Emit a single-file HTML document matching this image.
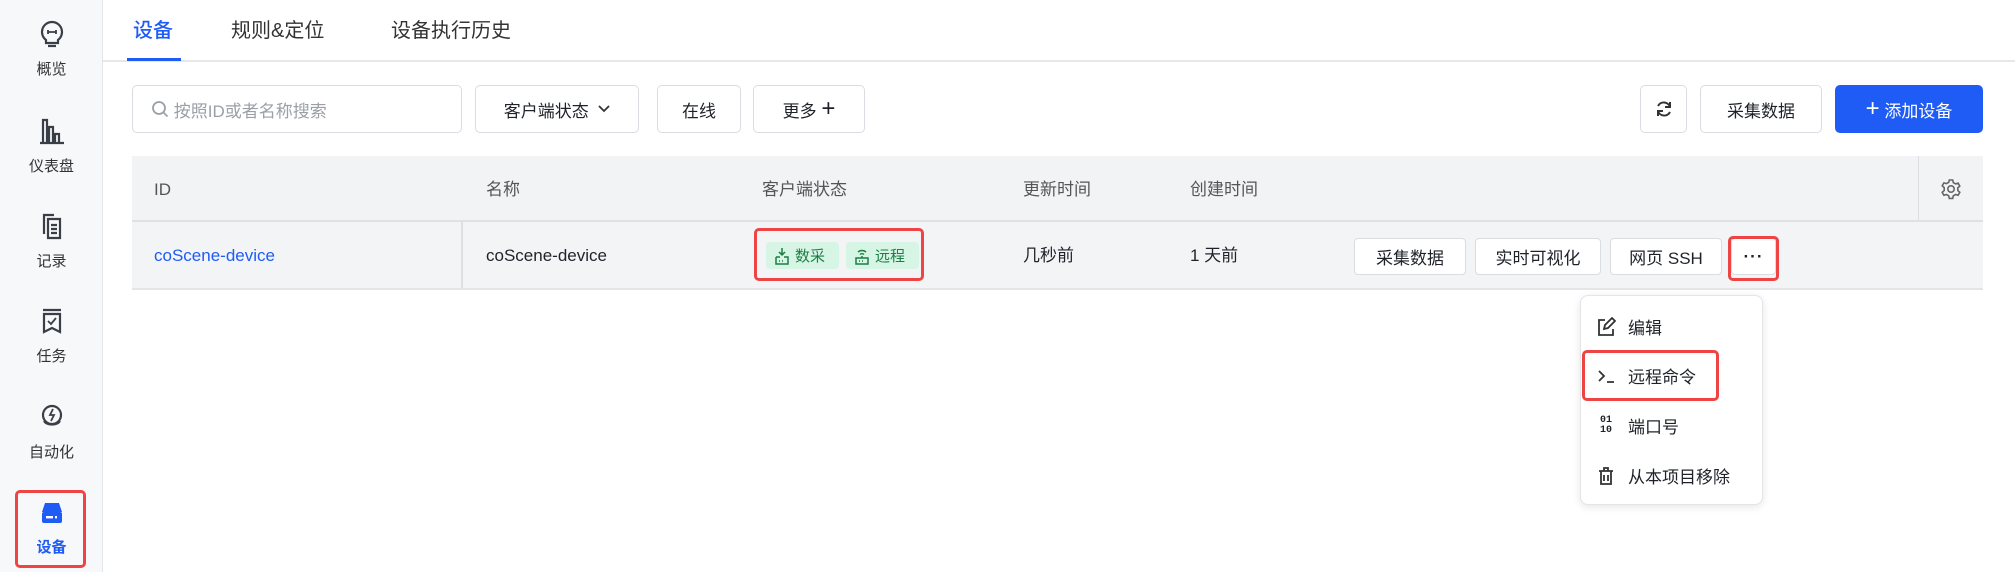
<!DOCTYPE html>
<html><head><meta charset="utf-8"><style>
*{box-sizing:border-box;margin:0;padding:0}
body{width:2015px;height:572px;background:#fff;font-family:"Liberation Sans","Noto Sans CJK SC",sans-serif;color:#1f2329;position:relative;overflow:hidden}
.a{position:absolute}
.side{left:0;top:0;width:103px;height:572px;background:#f7f8fa;border-right:1px solid #e3e5e8}
.si{position:absolute;left:0;width:103px;text-align:center;font-size:15px;color:#333}
.si svg{display:block;margin:0 auto 10px}
.tab{top:14px;font-size:20px;color:#333}
.btn{border:1px solid #d9dce1;border-radius:5px;background:#fff;font-size:17px;color:#1f2329;display:flex;align-items:center;justify-content:center}
.th{font-size:17px;color:#555;top:176px;height:28px;line-height:28px}
.td{font-size:17px;top:242px;height:28px;line-height:28px}
.sb{top:238px;height:37px;border:1px solid #d9dce1;border-radius:4px;background:#fff;font-size:17px;display:flex;align-items:center;justify-content:center}
.tag{top:242px;height:27px;background:#d6f5e4;border-radius:4px;color:#1c7f45;font-size:15px;display:flex;align-items:center;padding-left:8px;gap:5px}
.mi{left:1596px;font-size:17px;display:flex;align-items:center;gap:12px}
.red{border:3px solid #ef4444;border-radius:5px}
</style></head><body>
<div class="a side"></div>
<div class="si" style="top:20px"><svg width="26" height="28" viewBox="0 0 26 28" fill="none" stroke="#3a3f47" stroke-width="2.2"><path d="M13 2a10 10 0 0 0-6 18v3h12v-3a10 10 0 0 0-6-18z"/><path d="M9 26h8"/><path d="M9 12h8M9 10v4M17 10v4" stroke-width="1.8"/></svg>概览</div>
<div class="si" style="top:117px"><svg width="28" height="28" viewBox="0 0 28 28" fill="none" stroke="#3a3f47" stroke-width="2.2"><path d="M5 25V3h4v22M11 25V10h4v15M17 25v-8h4v8M2 26h24"/></svg>仪表盘</div>
<div class="si" style="top:212px"><svg width="26" height="28" viewBox="0 0 26 28" fill="none" stroke="#3a3f47" stroke-width="2.2"><path d="M5 22V3h10M9 7h12v19H9zM12 13h6M12 17h6M12 21h6"/></svg>记录</div>
<div class="si" style="top:307px"><svg width="26" height="28" viewBox="0 0 26 28" fill="none" stroke="#3a3f47" stroke-width="2.2"><path d="M4 3h18M5 7h16v18l-8-4-8 4z"/><path d="M9 14l3 3 5-6" stroke-width="1.8"/></svg>任务</div>
<div class="si" style="top:403px"><svg width="26" height="28" viewBox="0 0 26 28" fill="none" stroke="#3a3f47" stroke-width="2.2"><circle cx="13" cy="12" r="9"/><path d="M5 18c2 5 14 5 16 0M14 6l-3 6h4l-3 6" stroke-width="1.8"/></svg>自动化</div>
<div class="si" style="top:500px;color:#1f5cf5;font-weight:bold"><svg width="26" height="26" viewBox="0 0 26 26"><path d="M6 3h14l3 9H3z" fill="#1f5cf5"/><rect x="3" y="12" width="20" height="11" rx="2" fill="#1f5cf5"/><rect x="7" y="16" width="7" height="2.4" fill="#fff"/><rect x="16" y="16" width="2" height="2.4" fill="#fff"/></svg>设备</div>
<div class="a red" style="left:15px;top:490px;width:71px;height:78px"></div>

<div class="a tab" style="left:133px;color:#1f5cf5;font-weight:500">设备</div>
<div class="a tab" style="left:231px">规则&amp;定位</div>
<div class="a tab" style="left:391px">设备执行历史</div>
<div class="a" style="left:103px;top:60px;width:1912px;height:2px;background:#e5e7eb"></div>
<div class="a" style="left:127px;top:58px;width:54px;height:3px;background:#1f5cf5"></div>

<div class="a btn" style="left:132px;top:85px;width:330px;height:48px;justify-content:flex-start;padding-left:18px;color:#9aa0a8"><svg width="18" height="18" viewBox="0 0 18 18" fill="none" stroke="#9aa0a8" stroke-width="1.8"><circle cx="8" cy="8" r="6"/><path d="M12.5 12.5l4 4"/></svg>&nbsp;按照ID或者名称搜索</div>
<div class="a btn" style="left:475px;top:85px;width:164px;height:48px">客户端状态&nbsp;&nbsp;<svg width="12" height="8" viewBox="0 0 12 8" fill="none" stroke="#333" stroke-width="1.8"><path d="M1 1l5 5 5-5"/></svg></div>
<div class="a btn" style="left:657px;top:85px;width:84px;height:48px">在线</div>
<div class="a btn" style="left:753px;top:85px;width:112px;height:48px">更多&nbsp;<span style="font-size:24px;font-weight:300">+</span></div>
<div class="a btn" style="left:1640px;top:85px;width:47px;height:48px"><svg width="20" height="20" viewBox="0 0 20 20" fill="none" stroke="#333" stroke-width="2"><path d="M16 8A6.5 6.5 0 0 0 4 7M4 12a6.5 6.5 0 0 0 12 1M16 3v5h-5M4 17v-5h5"/></svg></div>
<div class="a btn" style="left:1700px;top:85px;width:122px;height:48px">采集数据</div>
<div class="a btn" style="left:1835px;top:85px;width:148px;height:48px;background:#1f5cf5;border-color:#1f5cf5;color:#fff"><span style="font-size:24px;font-weight:300">+</span>&nbsp;添加设备</div>

<div class="a" style="left:132px;top:156px;width:1851px;height:64px;background:#f2f3f5"></div>
<div class="a" style="left:1918px;top:156px;width:1px;height:64px;background:#dcdfe3"></div>
<div class="a" style="left:1940px;top:178px"><svg width="22" height="22" viewBox="0 0 22 22" fill="none" stroke="#666" stroke-width="1.6"><circle cx="11" cy="11" r="3.2"/><path d="M9.3 2h3.4l.6 2.6 2.3 1.3 2.5-.8 1.7 3-2 1.8v2.6l2 1.8-1.7 3-2.5-.8-2.3 1.3-.6 2.6H9.3l-.6-2.6-2.3-1.3-2.5.8-1.7-3 2-1.8V9.6l-2-1.8 1.7-3 2.5.8 2.3-1.3z"/></svg></div>
<div class="a th" style="left:154px">ID</div>
<div class="a th" style="left:486px">名称</div>
<div class="a th" style="left:762px">客户端状态</div>
<div class="a th" style="left:1023px">更新时间</div>
<div class="a th" style="left:1190px">创建时间</div>
<div class="a" style="left:132px;top:220px;width:1851px;height:2px;background:#dfe1e5"></div>
<div class="a" style="left:132px;top:222px;width:1851px;height:67px;background:#f3f4f6"></div>
<div class="a" style="left:461px;top:222px;width:2px;height:67px;background:#dcdfe3"></div>
<div class="a" style="left:132px;top:288px;width:1851px;height:2px;background:#e3e5e8"></div>
<div class="a td" style="left:154px;color:#1f5cf5">coScene-device</div>
<div class="a td" style="left:486px">coScene-device</div>
<div class="a tag" style="left:766px;width:73px"><svg width="16" height="18" viewBox="0 0 16 18" fill="none" stroke="#1c7f45" stroke-width="1.5"><path d="M8 1v7M5 5l3 3 3-3M2 10v7h12v-7H10M2 10h4M5 14h1M8 14h1"/></svg>数采</div>
<div class="a tag" style="left:846px;width:73px"><svg width="16" height="18" viewBox="0 0 16 18" fill="none" stroke="#1c7f45" stroke-width="1.5"><path d="M4 5a6 6 0 0 1 8 0M6 7.5a3 3 0 0 1 4 0M8 9v2M2 11h12v6H2zM5 14h1M8 14h1"/></svg>远程</div>
<div class="a red" style="left:754px;top:228px;width:170px;height:53px"></div>
<div class="a td" style="left:1023px">几秒前</div>
<div class="a td" style="left:1190px">1 天前</div>
<div class="a sb" style="left:1354px;width:112px">采集数据</div>
<div class="a sb" style="left:1475px;width:126px">实时可视化</div>
<div class="a sb" style="left:1610px;width:112px">网页 SSH</div>
<div class="a sb" style="left:1731px;width:45px;font-weight:bold;letter-spacing:1px">···</div>
<div class="a red" style="left:1728px;top:236px;width:51px;height:45px"></div>

<div class="a" style="left:1580px;top:295px;width:183px;height:210px;background:#fff;border:1px solid #e3e5e8;border-radius:8px;box-shadow:0 2px 8px rgba(0,0,0,.1)"></div>
<div class="a mi" style="top:314px"><svg width="20" height="20" viewBox="0 0 20 20" fill="none" stroke="#333" stroke-width="1.8"><path d="M9 3H3v15h14v-6M8 12l1-4 7-7 3 3-7 7z"/></svg>编辑</div>
<div class="a mi" style="top:363px"><svg width="20" height="20" viewBox="0 0 20 20" fill="none" stroke="#333" stroke-width="1.8"><path d="M3 5l5 5-5 5M11 16h7"/></svg>远程命令</div>
<div class="a red" style="left:1582px;top:350px;width:137px;height:51px"></div>
<div class="a mi" style="top:413px"><span style="font-family:'Liberation Mono',monospace;font-size:10px;line-height:10px;width:20px;text-align:center;font-weight:bold">01<br>10</span>端口号</div>
<div class="a mi" style="top:463px"><svg width="20" height="20" viewBox="0 0 20 20" fill="none" stroke="#333" stroke-width="1.8"><path d="M3 5h14M8 5V2h4v3M5 5v13h10V5M8 9v6M12 9v6"/></svg>从本项目移除</div>
</body></html>
